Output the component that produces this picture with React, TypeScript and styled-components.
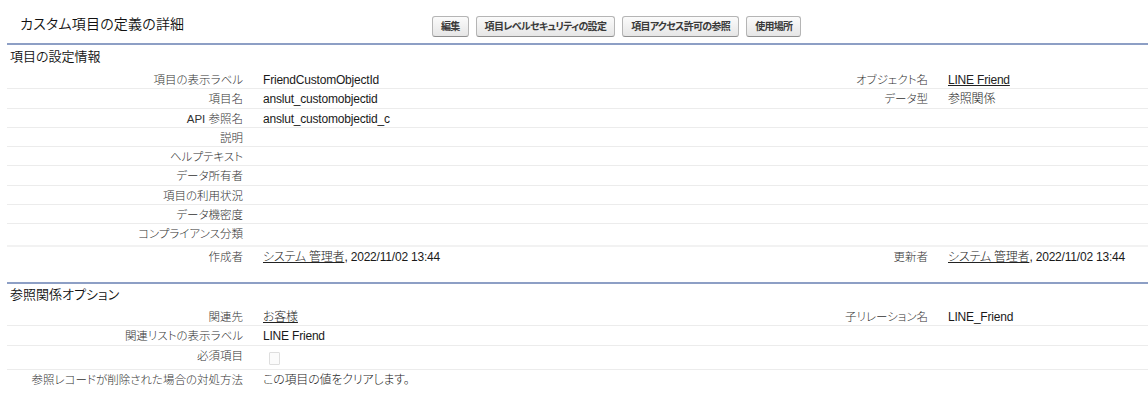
import React from "react";
import styled, { createGlobalStyle } from "styled-components";

const GlobalStyle = createGlobalStyle`
  html, body {
    margin: 0;
    padding: 0;
    background: #ffffff;
  }
  body {
    font-family: "Liberation Sans", "Noto Sans CJK JP", sans-serif;
    font-feature-settings: "palt";
    color: #000;
  }
`;

const COLS = "246px 1fr 270px 210px";

const Page = styled.div`
  padding-left: 7px;
  width: 1141px;
`;

const Header = styled.div`
  display: flex;
  align-items: flex-start;
  height: 43px;
  padding-top: 16px;
  box-sizing: border-box;
`;

const Title = styled.h2`
  flex: 0 0 412px;
  margin: 0;
  padding-left: 13px;
  font-size: 14px;
  font-weight: 350;
  line-height: 17px;
  letter-spacing: 0.2px;
  color: #111;
`;

const ButtonBar = styled.div`
  display: flex;
  gap: 7px;
`;

const Button = styled.button`
  height: 21px;
  padding: 0 8px;
  border: 1px solid #b5b5b5;
  border-bottom-color: #8f8f8f;
  border-radius: 3px;
  background: linear-gradient(#fbfbfb, #e6e6e6);
  font-family: "Liberation Sans", "Noto Sans CJK JP", sans-serif;
  font-feature-settings: "palt";
  font-size: 10px;
  letter-spacing: -0.7px;
  font-weight: bold;
  color: #3a3a3a;
  line-height: 19px;
  cursor: pointer;
`;

const Section = styled.section<{ $bottom: number }>`
  border-top: 2px solid #8d9fc5;
  padding-bottom: ${(p) => p.$bottom}px;
`;

const SectionTitle = styled.h3<{ $h: number }>`
  margin: 0;
  height: ${(p) => p.$h}px;
  padding-left: 3px;
  font-size: 13px;
  font-weight: 350;
  line-height: ${(p) => p.$h - 2}px;
  color: #111;
`;

const Row = styled.div<{ $system?: boolean }>`
  display: grid;
  grid-template-columns: ${COLS};
  border-bottom: 1px solid #ececec;
  ${(p) =>
    p.$system
      ? `margin-top: 2px; border-top: 2px solid #f2f2f2; border-bottom: none;`
      : ""}
  &:last-child {
    border-bottom: none;
  }
`;

const Label = styled.div`
  padding: 3px 10px 1.3px 0;
  text-align: right;
  font-size: 11.5px;
  font-weight: 300;
  line-height: 14px;
  color: #333;
  white-space: nowrap;
`;

const Value = styled.div`
  padding: 3px 0 1.3px 10px;
  font-size: 12px;
  font-weight: 300;
  line-height: 14px;
  color: #1a1a1a;
  white-space: nowrap;
  letter-spacing: -0.2px;
`;

const Link = styled.a`
  color: #222;
  text-decoration: underline;
  cursor: pointer;
`;

const Checkbox = styled.span`
  display: block;
  width: 9px;
  height: 11px;
  margin: 3px 0 3px 6px;
  border: 1px solid #dedede;
  border-radius: 1px;
  background: #fbfbfb;
`;

type Field = { label: string; value?: React.ReactNode; rlabel?: string; rvalue?: React.ReactNode };

const detailRows: Field[] = [
  { label: "項目の表示ラベル", value: "FriendCustomObjectId", rlabel: "オブジェクト名", rvalue: <Link>LINE Friend</Link> },
  { label: "項目名", value: "anslut_customobjectid", rlabel: "データ型", rvalue: "参照関係" },
  { label: "API 参照名", value: "anslut_customobjectid_c" },
  { label: "説明" },
  { label: "ヘルプテキスト" },
  { label: "データ所有者" },
  { label: "項目の利用状況" },
  { label: "データ機密度" },
  { label: "コンプライアンス分類" },
];

const stamp = (
  <>
    <Link>システム 管理者</Link>, 2022/11/02 13:44
  </>
);

const lookupRows: Field[] = [
  { label: "関連先", value: <Link>お客様</Link>, rlabel: "子リレーション名", rvalue: "LINE_Friend" },
  { label: "関連リストの表示ラベル", value: "LINE Friend" },
  { label: "必須項目", value: <Checkbox /> },
  { label: "参照レコードが削除された場合の対処方法", value: "この項目の値をクリアします。" },
];

const FieldRow = ({ f, system }: { f: Field; system?: boolean }) => (
  <Row $system={system}>
    <Label>{f.label}</Label>
    <Value>{f.value}</Value>
    <Label>{f.rlabel}</Label>
    <Value>{f.rvalue}</Value>
  </Row>
);

export default function App() {
  return (
    <Page>
      <GlobalStyle />
      <Header>
        <Title>カスタム項目の定義の詳細</Title>
        <ButtonBar>
          <Button>編集</Button>
          <Button>項目レベルセキュリティの設定</Button>
          <Button>項目アクセス許可の参照</Button>
          <Button>使用場所</Button>
        </ButtonBar>
      </Header>
      <Section $bottom={17}>
        <SectionTitle $h={25}>項目の設定情報</SectionTitle>
        <div>
          {detailRows.map((f) => (
            <FieldRow key={f.label} f={f} />
          ))}
        </div>
        <FieldRow system f={{ label: "作成者", value: stamp, rlabel: "更新者", rvalue: stamp }} />
      </Section>
      <Section $bottom={14}>
        <SectionTitle $h={23}>参照関係オプション</SectionTitle>
        <div>
          {lookupRows.map((f) => (
            <FieldRow key={f.label} f={f} />
          ))}
        </div>
      </Section>
    </Page>
  );
}
